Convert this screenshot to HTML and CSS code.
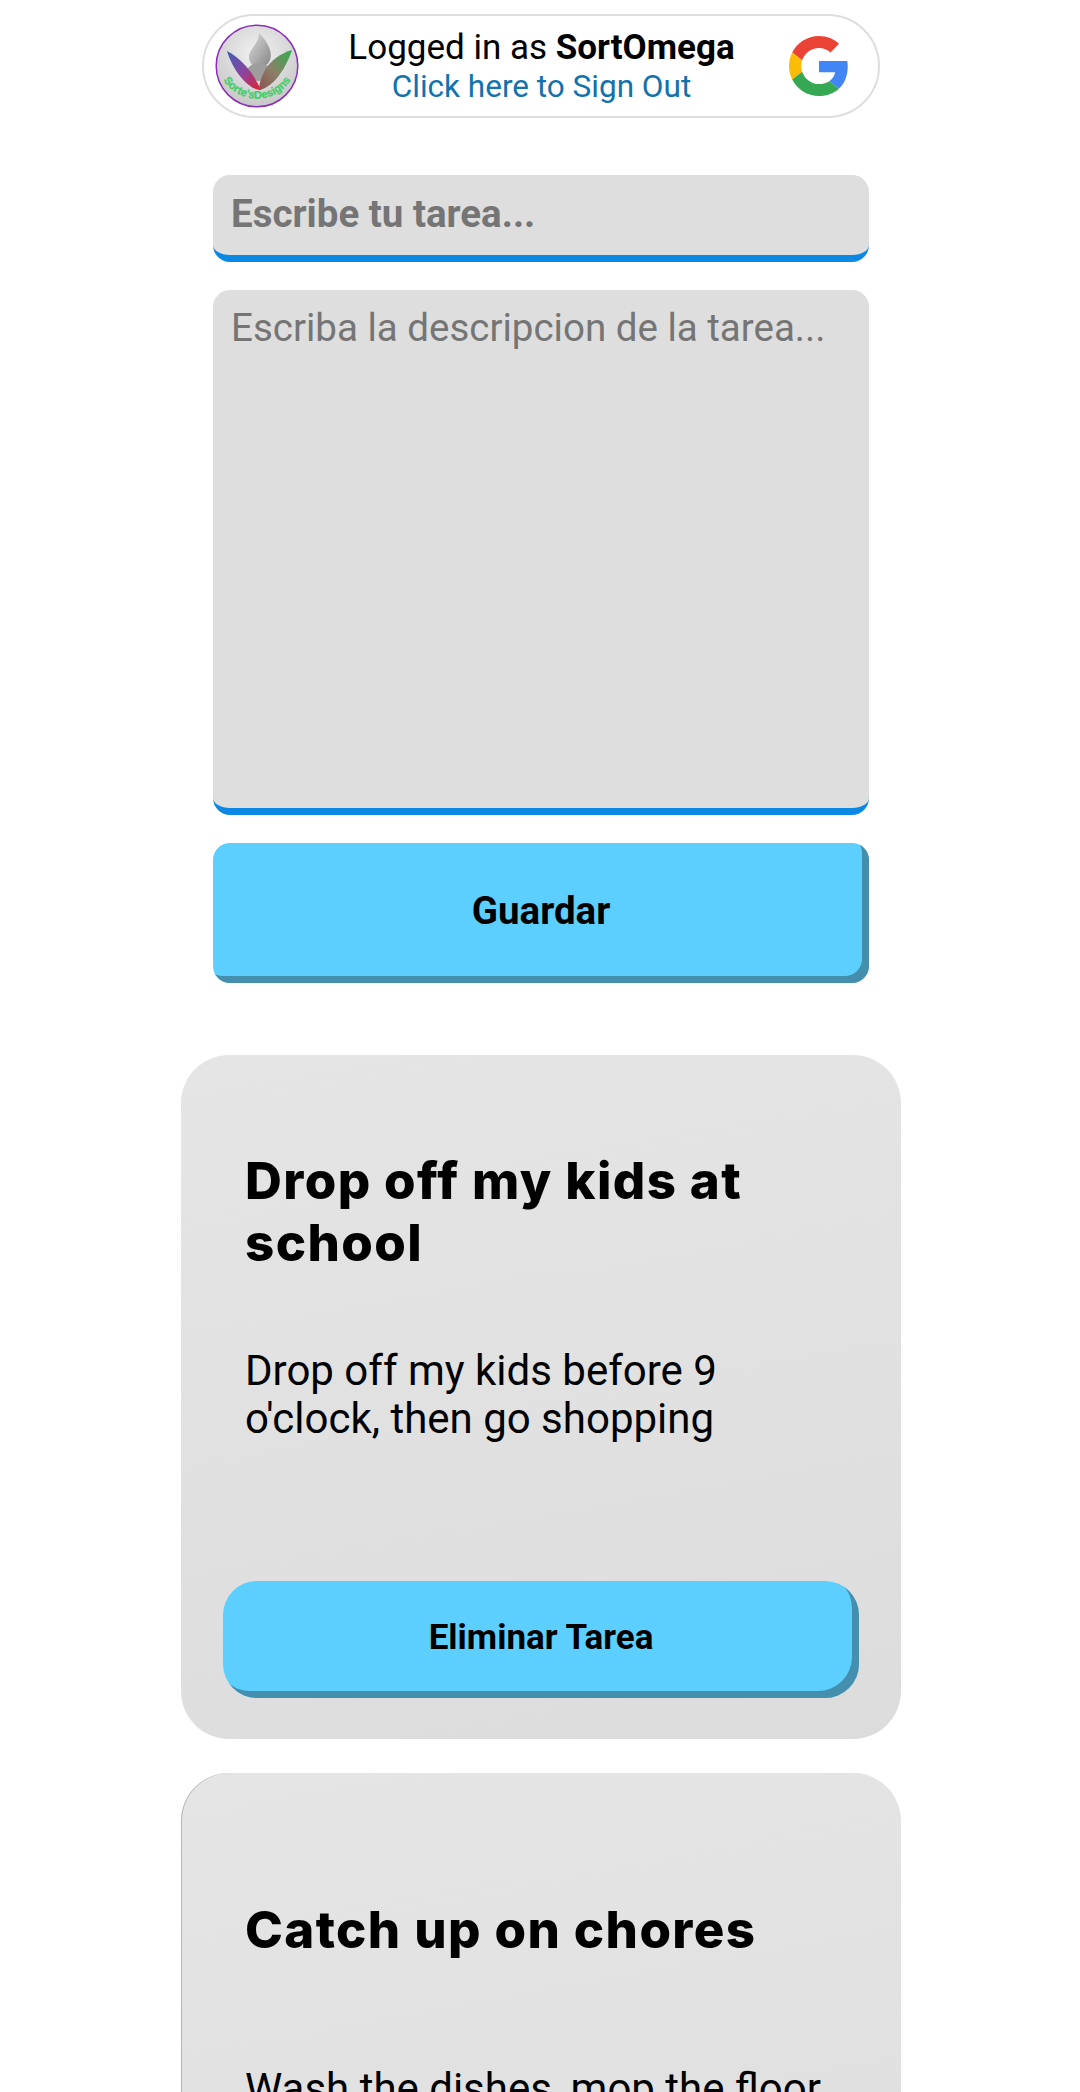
FILE: index.html
```html
<!DOCTYPE html>
<html lang="es">
<head>
<meta charset="utf-8">
<title>Tareas</title>
<link rel="stylesheet" href="styles.css">
</head>
<body>
<main class="page">
  <div class="login-pill">
    <svg class="avatar" viewBox="0 0 84 84" aria-hidden="true">
      <defs>
        <radialGradient id="disc" cx="50%" cy="35%" r="70%">
          <stop offset="0" stop-color="#f2f2f2"/>
          <stop offset="1" stop-color="#c4c4c4"/>
        </radialGradient>
        <linearGradient id="drop" x1="0" y1="0" x2="1" y2="1">
          <stop offset="0" stop-color="#dcdcdc"/>
          <stop offset="1" stop-color="#858585"/>
        </linearGradient>
        <linearGradient id="leafL" x1="0" y1="0" x2="1" y2="1">
          <stop offset="0" stop-color="#3d5fb5"/>
          <stop offset=".5" stop-color="#8a45a3"/>
          <stop offset="1" stop-color="#e0222f"/>
        </linearGradient>
        <linearGradient id="leafR" x1="1" y1="0" x2="0" y2="1">
          <stop offset="0" stop-color="#2fae4d"/>
          <stop offset=".55" stop-color="#8b8068"/>
          <stop offset="1" stop-color="#8c5050"/>
        </linearGradient>
        <path id="arc" d="M6 52 A40 40 0 0 0 78 52"/>
      </defs>
      <circle cx="42" cy="42" r="40.8" fill="url(#disc)" stroke="#8a2fb8" stroke-width="1.5"/>
      <path d="M44 9 C53 18 58 28 55 36 C53 41 49 43 44 43 C38 43 34 39 34 33 C34 25 44 20 44 9Z" fill="url(#drop)"/>
      <ellipse cx="44" cy="48" rx="12" ry="9" fill="#9d9d9d"/>
      <path d="M12 27 C25 34 37 46 46 66 C35 66 19 50 12 27Z" fill="url(#leafL)"/>
      <path d="M77 26 C66 29 55 37 50 46 C46 54 44 60 44 66 C57 64 70 47 77 26Z" fill="url(#leafR)"/>
      <text class="avatar-text"><textPath href="#arc" startOffset="50%" text-anchor="middle">Sorte'sDesigns</textPath></text>
    </svg>
    <div class="login-text">
      <div class="login-line">Logged in as <strong>SortOmega</strong></div>
      <a class="login-link" href="#">Click here to Sign Out</a>
    </div>
    <svg class="google" viewBox="0 0 48 48" aria-hidden="true">
      <path fill="#EA4335" d="M24 9.5c3.54 0 6.71 1.22 9.21 3.6l6.85-6.85C35.9 2.38 30.47 0 24 0 14.62 0 6.51 5.38 2.56 13.22l7.98 6.19C12.43 13.72 17.74 9.5 24 9.5z"/>
      <path fill="#4285F4" d="M46.98 24.55c0-1.57-.15-3.09-.38-4.55H24v9.02h12.94c-.58 2.96-2.26 5.48-4.78 7.18l7.73 6c4.51-4.18 7.09-10.36 7.09-17.65z"/>
      <path fill="#FBBC05" d="M10.53 28.59c-.48-1.45-.76-2.99-.76-4.59s.27-3.14.76-4.59l-7.98-6.19C.92 16.46 0 20.12 0 24c0 3.88.92 7.54 2.56 10.78l7.97-6.19z"/>
      <path fill="#34A853" d="M24 48c6.48 0 11.93-2.13 15.89-5.81l-7.73-6c-2.15 1.45-4.92 2.3-8.16 2.3-6.26 0-11.57-4.22-13.47-9.91l-7.98 6.19C6.51 42.62 14.62 48 24 48z"/>
    </svg>
  </div>

  <form class="task-form">
    <input class="field field-title" type="text" placeholder="Escribe tu tarea...">
    <textarea class="field field-desc" placeholder="Escriba la descripcion de la tarea..."></textarea>
    <button class="btn btn-save" type="button">Guardar</button>
  </form>

  <section class="tasks">
    <article class="card">
      <h2 class="card-title">Drop off my kids at school</h2>
      <p class="card-desc">Drop off my kids before 9 o'clock, then go shopping</p>
      <button class="btn btn-delete" type="button">Eliminar Tarea</button>
    </article>
    <article class="card card-edge">
      <h2 class="card-title">Catch up on chores</h2>
      <p class="card-desc">Wash the dishes, mop the floor</p>
    </article>
  </section>
</main>
</body>
</html>
```
FILE: styles.css
```css
* { box-sizing: border-box; }
html, body {
  margin: 0;
  height: 2092px;
  overflow: hidden;
  background: #fff;
}
body { font-family: Roboto, "Liberation Sans", sans-serif; color: #000; }

.page {
  width: 1080px;
  display: flex;
  flex-direction: column;
  align-items: center;
  padding: 14px 0 0 2px;
}

.login-pill {
  width: 678px;
  height: 104px;
  border: 2px solid #dedede;
  border-radius: 52px;
  display: flex;
  align-items: center;
  padding: 0 29px 0 11px;
  background: #fff;
}
.avatar { width: 84px; height: 84px; flex: none; }
.avatar-text {
  font-family: "Liberation Sans", sans-serif;
  font-size: 11px;
  font-weight: 700;
  fill: #3fce68;
  stroke: #3fce68;
  stroke-width: .3px;
}
.login-text {
  flex: 1;
  text-align: center;
  line-height: 39px;
  padding: 1px 5px 0 0;
}
.login-line { font-size: 35px; white-space: nowrap; }
.login-line strong { font-weight: 700; }
.login-link {
  display: block;
  font-size: 31.5px;
  color: #1272ae;
  text-decoration: none;
}
.google { width: 60px; height: 60px; flex: none; }

.task-form {
  margin-top: 57px;
  width: 656px;
  display: flex;
  flex-direction: column;
  gap: 28px;
}
.field {
  display: block;
  width: 100%;
  border: 0;
  border-bottom: 7px solid #0a88e4;
  border-radius: 17px;
  background: #dedede;
  padding: 0 18px;
  color: #000;
  font-family: Roboto, "Liberation Sans", sans-serif;
  outline: none;
}
.field::placeholder { color: #757575; opacity: 1; }
.field-title {
  height: 87px;
  font-size: 38.5px;
  font-weight: 700;
  padding-bottom: 4px;
}
.field-desc {
  height: 525px;
  font-size: 38.5px;
  line-height: 44px;
  padding-top: 16px;
  resize: none;
}

.btn {
  display: block;
  width: 100%;
  border: 0;
  background: #5ccfff;
  color: #000;
  font-family: Roboto, "Liberation Sans", sans-serif;
  font-weight: 700;
  box-shadow: inset -7px -7px 0 #448fad;
}
.btn-save {
  height: 140px;
  padding-bottom: 7px;
  border-radius: 17px;
  font-size: 38.5px;
}

.tasks {
  margin-top: 72px;
  width: 720px;
  display: flex;
  flex-direction: column;
  gap: 34px;
}
.card {
  height: 684px;
  flex: none;
  padding: 95px 42px 0;
  border-radius: 48px;
  background: linear-gradient(170deg, #e5e5e5 0%, #e0e0e0 60%, #dcdcdc 100%);
  display: flex;
  flex-direction: column;
}
.card-edge { box-shadow: inset 1px 0 0 #b5b5b5; }
.card-title {
  margin: 0 0 0 22px;
  min-height: 124px;
  display: flex;
  align-items: center;
  font-family: Inter, "Liberation Sans", sans-serif;
  font-size: 51px;
  font-weight: 800;
  letter-spacing: 1.4px;
  line-height: 62px;
}
.card-desc {
  margin: 73px 0 0 22px;
  font-size: 42px;
  line-height: 48px;
  font-weight: 400;
}
.btn-delete {
  margin-top: auto;
  margin-bottom: 41px;
  height: 117px;
  padding-bottom: 5px;
  border-radius: 34px;
  font-size: 35px;
}
```
